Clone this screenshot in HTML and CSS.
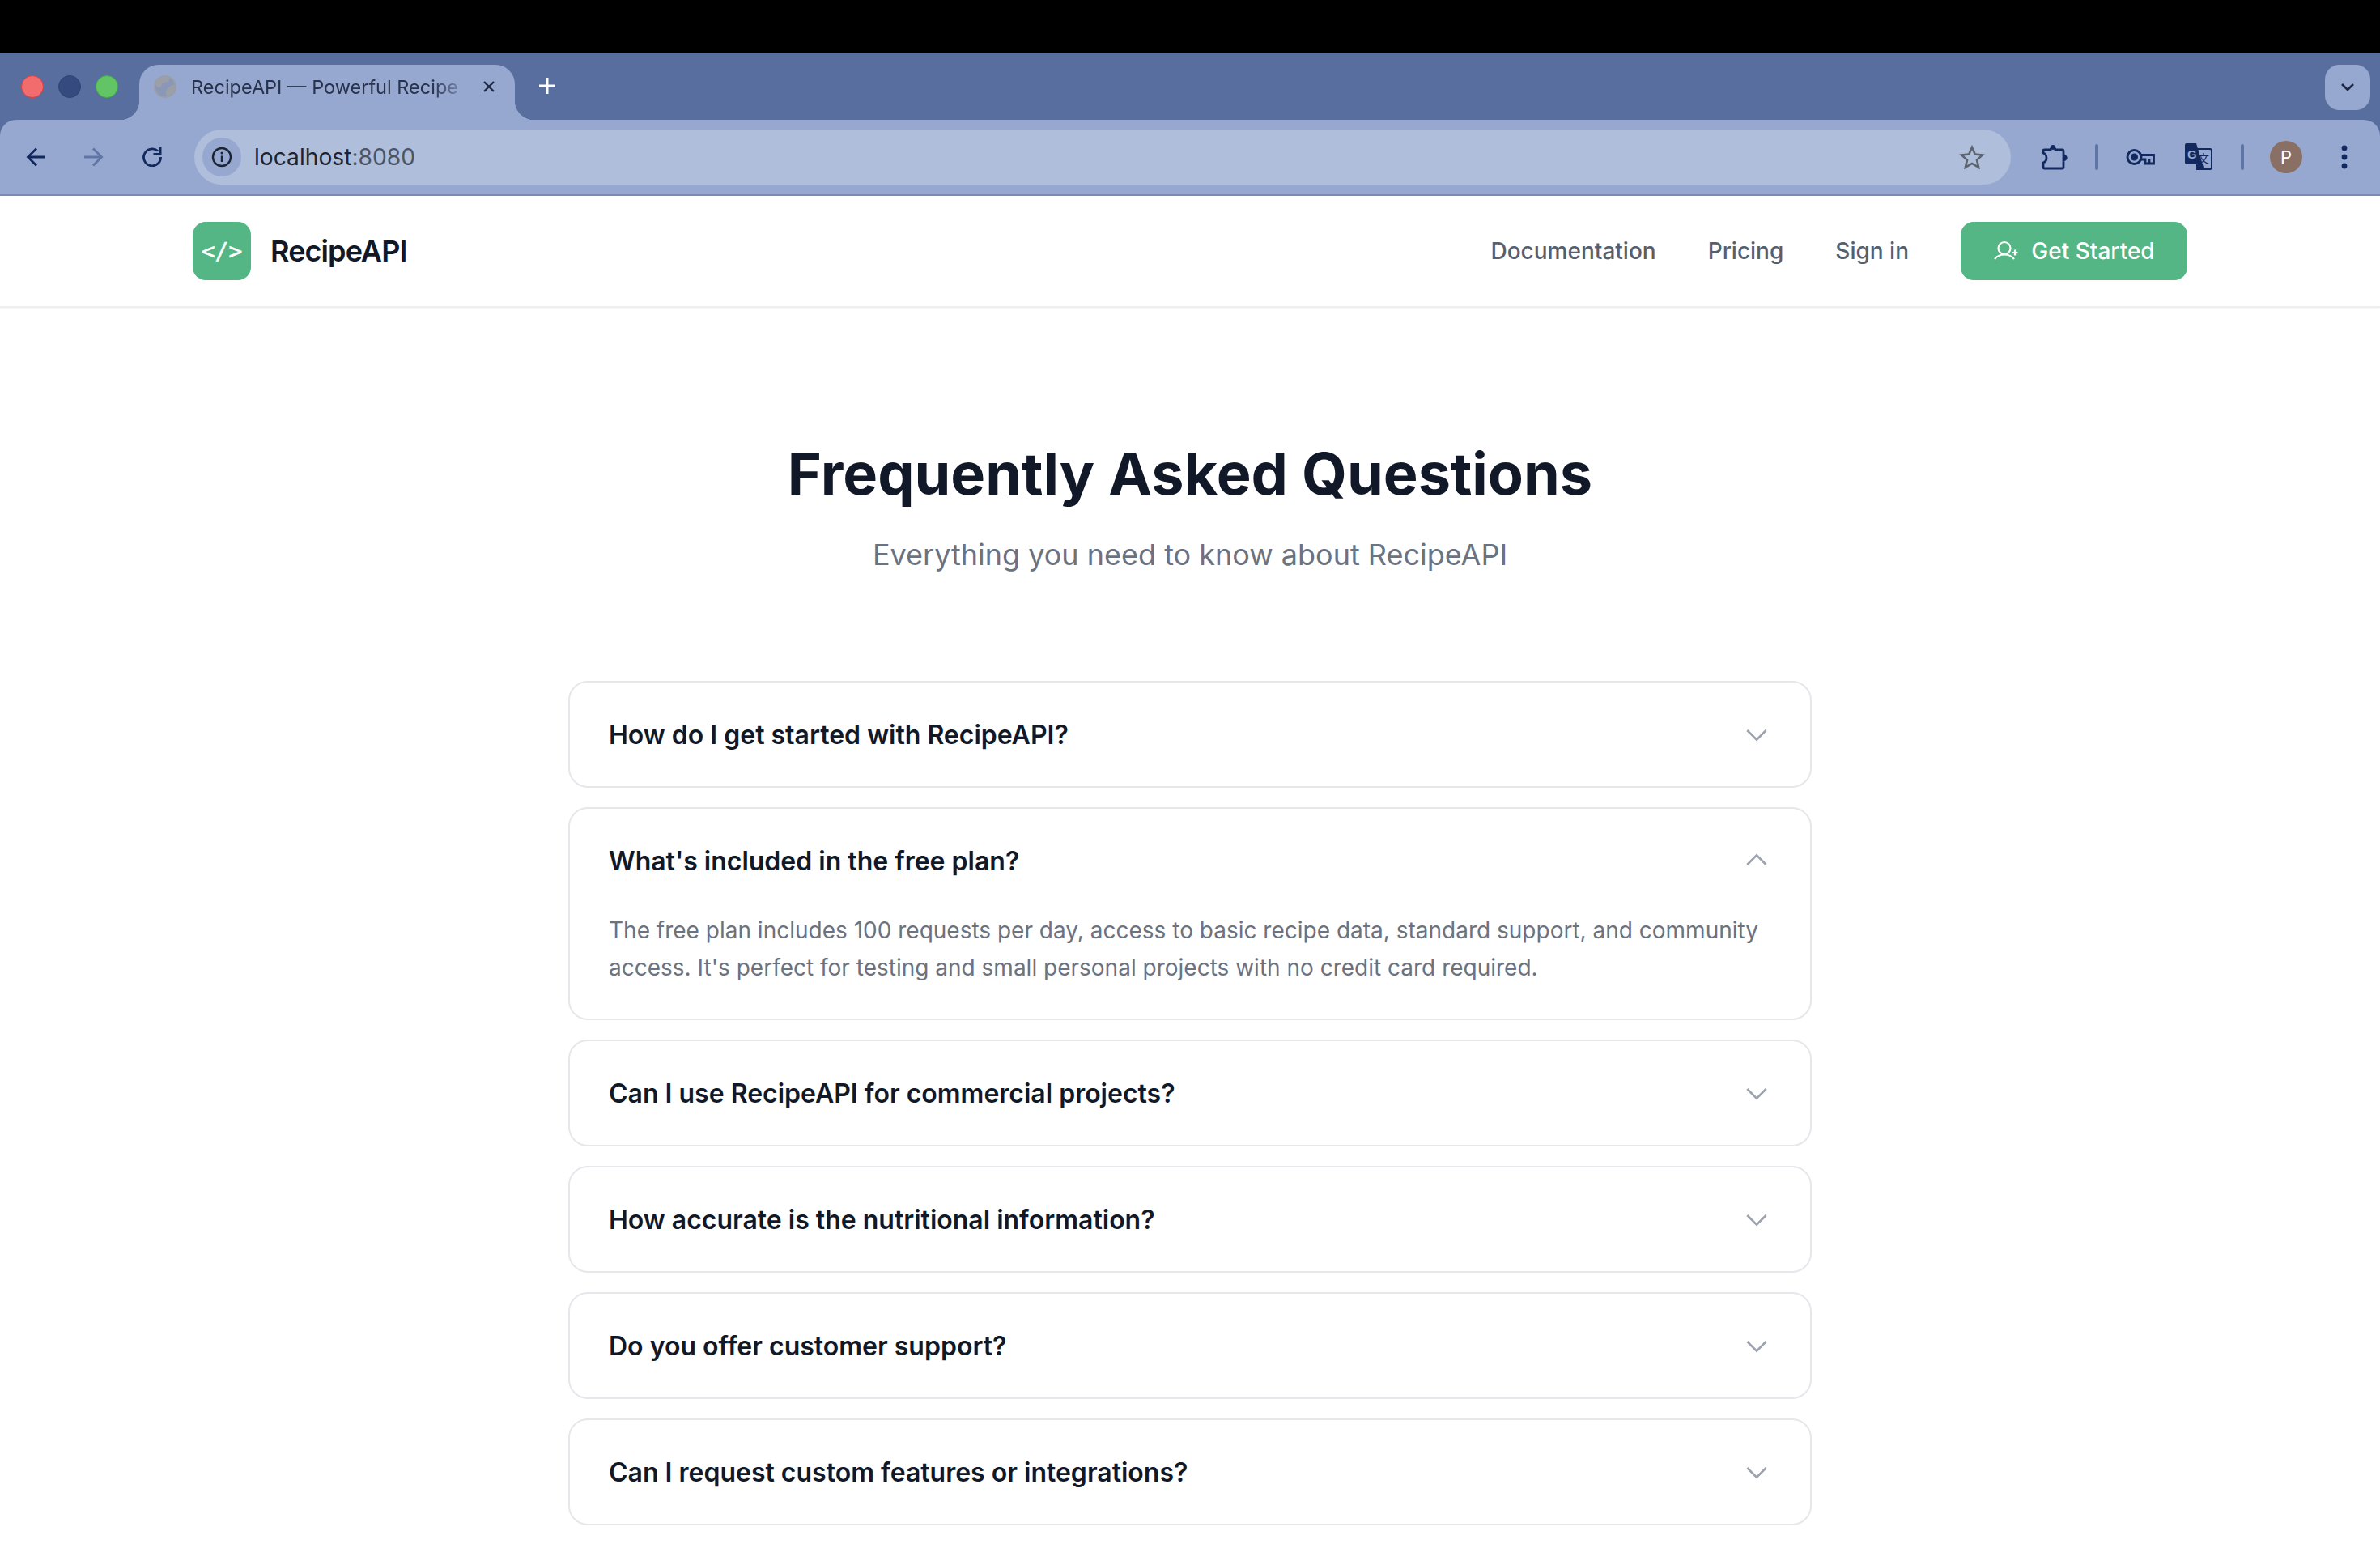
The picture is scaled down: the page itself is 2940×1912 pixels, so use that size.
FILE: index.html
```html
<!DOCTYPE html>
<html lang="en">
<head>
    <meta charset="UTF-8">
    <title>RecipeAPI — FAQ</title>
    <link rel="stylesheet" href="styles.css">
</head>
<body>

    <div class="topbar"></div>

    <div class="tabstrip">
        <div class="lights">
            <span class="light red"></span>
            <span class="light navy"></span>
            <span class="light green"></span>
        </div>
        <div class="tab">
            <svg class="globe" width="28" height="28" viewBox="0 0 28 28">
                <circle cx="14" cy="14" r="13" fill="#8a97b8" stroke="#9a9fa8" stroke-width="2"/>
                <path d="M6 4c4-3 9-3 13-1 1 3-2 6-6 6-4 0-2 4-5 6-3 1-5-1-6-4 0-3 2-5 4-7zM26 12c1 6-3 12-9 14-3-2-3-5-1-8 2-3 6-7 10-6z" fill="#9a9fa8"/>
            </svg>
            <span class="tab-title">RecipeAPI — Powerful Recipe</span>
            <svg class="tab-close" width="18" height="18" viewBox="0 0 18 18">
                <path d="M3 3l12 12M15 3L3 15" stroke="#1f2a44" stroke-width="2.4" fill="none"/>
            </svg>
        </div>
        <svg class="new-tab" width="24" height="24" viewBox="0 0 24 24">
            <path d="M12 2v20M2 12h20" stroke="#fff" stroke-width="3" fill="none"/>
        </svg>
        <div class="tab-menu">
            <svg width="20" height="14" viewBox="0 0 20 14">
                <path d="M3 3l7 7 7-7" stroke="#1c2742" stroke-width="2.6" fill="none"/>
            </svg>
        </div>
    </div>

    <div class="toolbar">
        <svg class="tool back" width="24" height="24" viewBox="0 0 24 24">
            <path d="M24 12H2M13 1.500 2.500 12 13 22.500" stroke="#12295f" stroke-width="2.800" fill="none"/>
        </svg>
        <svg class="tool forward" width="24" height="24" viewBox="0 0 24 24">
            <path d="M0 12h22M11 1.500 21.500 12 11 22.500" stroke="#5f75a6" stroke-width="2.800" fill="none"/>
        </svg>
        <svg class="tool reload" width="24" height="24" viewBox="0 0 24 24">
            <path d="M22.500 12A10.500 10.500 0 1 1 19 4.500" stroke="#12295f" stroke-width="2.800" fill="none"/>
            <path d="M23.500 0v10h-10V7h7V0z" fill="#12295f"/>
        </svg>
        <div class="omnibox">
            <div class="site-info">
                <svg width="26" height="26" viewBox="0 0 26 26">
                    <circle cx="13" cy="13" r="11" stroke="#1d2430" stroke-width="2.4" fill="none"/>
                    <path d="M13 11.500V19" stroke="#1d2430" stroke-width="2.4"/>
                    <circle cx="13" cy="8" r="1.500" fill="#1d2430"/>
                </svg>
            </div>
            <span class="url">localhost<span class="port">:8080</span></span>
            <svg class="star" width="32" height="30" viewBox="0 0 32 30">
                <path d="M16 3l3.800 8.600 9.200.9-7 6.100 2.100 9.100-8.100-4.800-8.100 4.800 2.100-9.100-7-6.100 9.200-.9z" stroke="#5c6470" stroke-width="2.600" fill="none"/>
            </svg>
        </div>
        <svg class="ext-puzzle" width="32" height="32" viewBox="0 0 32 32">
            <path d="M3.500 7H11a3 3 0 0 1 6 0h8.500a1.500 1.500 0 0 1 1.500 1.500V14a3 3 0 0 1 0 6v8.500a1.500 1.500 0 0 1-1.500 1.500h-22A1.500 1.500 0 0 1 2 28.500V23c3-1 4-3.500 4-6s-1-5-4-6V8.500A1.500 1.500 0 0 1 3.500 7z" stroke="#12295f" stroke-width="2.800" fill="none"/>
            <circle cx="14" cy="4" r="3" fill="#12295f"/>
            <circle cx="28.500" cy="17" r="3" fill="#12295f"/>
        </svg>
        <span class="tool-sep first"></span>
        <svg class="ext-key" width="36" height="20" viewBox="0 0 36 20">
            <circle cx="10.500" cy="10" r="8.500" stroke="#12295f" stroke-width="3" fill="none"/>
            <circle cx="10.500" cy="10" r="4.500" fill="#12295f"/>
            <path d="M19 7.500H34.500V18H24V13H19M29 13v5" stroke="#12295f" stroke-width="2.800" fill="none"/>
        </svg>
        <svg class="ext-translate" width="34" height="34" viewBox="0 0 34 34">
            <path d="M15 7h16a2 2 0 0 1 2 2v21a2 2 0 0 1-2 2H15z" fill="#96a8cf" stroke="#12295f" stroke-width="2"/>
            <path d="M2 0h12l10 33H17l-2-7H2a2 2 0 0 1-2-2V2a2 2 0 0 1 2-2z" fill="#12295f"/>
            <text x="3" y="19" class="translate-g">G</text>
            <text x="16" y="24" class="translate-zh">文</text>
        </svg>
        <span class="tool-sep second"></span>
        <div class="avatar">P</div>
        <svg class="kebab" width="10" height="32" viewBox="0 0 10 32">
            <circle cx="5" cy="5" r="3.400" fill="#12295f"/>
            <circle cx="5" cy="16" r="3.400" fill="#12295f"/>
            <circle cx="5" cy="27" r="3.400" fill="#12295f"/>
        </svg>
    </div>

    <nav class="nav">
        <a class="brand" href="#">
            <span class="brand-mark">&lt;/&gt;</span>
            <span class="brand-name">RecipeAPI</span>
        </a>
        <div class="nav-links">
            <a href="#">Documentation</a>
            <a href="#">Pricing</a>
            <a href="#">Sign in</a>
            <a class="btn-start" href="#">
                <svg width="32" height="32" viewBox="0 0 32 32">
                    <circle cx="14" cy="12.500" r="7.500" stroke="#fff" stroke-width="2.200" fill="none"/>
                    <path d="M2 26c3-4 7-5.500 12-5.500s9 1.500 12 5.500M27 14.500v7M23.500 18h7" stroke="#fff" stroke-width="2.200" fill="none"/>
                </svg>
                Get Started
            </a>
        </div>
    </nav>

    <main class="faq">
        <h1>Frequently Asked Questions</h1>
        <p class="faq-sub">Everything you need to know about RecipeAPI</p>

        <div class="faq-list">
            <div class="faq-item">
                <div class="faq-q">
                    <span>How do I get started with RecipeAPI?</span>
                    <svg class="chev" viewBox="0 0 24 24"><path d="M19 9l-7 7-7-7"/></svg>
                </div>
            </div>
            <div class="faq-item open">
                <div class="faq-q">
                    <span>What's included in the free plan?</span>
                    <svg class="chev" viewBox="0 0 24 24"><path d="M5 15l7-7 7 7"/></svg>
                </div>
                <p class="faq-a">The free plan includes 100 requests per day, access to basic recipe data, standard support, and community access. It's perfect for testing and small personal projects with no credit card required.</p>
            </div>
            <div class="faq-item">
                <div class="faq-q">
                    <span>Can I use RecipeAPI for commercial projects?</span>
                    <svg class="chev" viewBox="0 0 24 24"><path d="M19 9l-7 7-7-7"/></svg>
                </div>
            </div>
            <div class="faq-item">
                <div class="faq-q">
                    <span>How accurate is the nutritional information?</span>
                    <svg class="chev" viewBox="0 0 24 24"><path d="M19 9l-7 7-7-7"/></svg>
                </div>
            </div>
            <div class="faq-item">
                <div class="faq-q">
                    <span>Do you offer customer support?</span>
                    <svg class="chev" viewBox="0 0 24 24"><path d="M19 9l-7 7-7-7"/></svg>
                </div>
            </div>
            <div class="faq-item">
                <div class="faq-q">
                    <span>Can I request custom features or integrations?</span>
                    <svg class="chev" viewBox="0 0 24 24"><path d="M19 9l-7 7-7-7"/></svg>
                </div>
            </div>
        </div>
    </main>

</body>
</html>
```

FILE: styles.css
```css
* { box-sizing: border-box; }

html, body {
    margin: 0;
    height: 100%;
    overflow: hidden;
}
body {
    font-family: Inter, "Liberation Sans", sans-serif;
    background: #fff;
    color: #111827;
}
a { text-decoration: none; color: inherit; }

.topbar {
    height: 66px;
    background: #000;
}

/* tab row */
.tabstrip {
    height: 82px;
    background: #586e9f;
    display: flex;
    align-items: flex-start;
    padding-top: 14px;
}
.lights {
    display: flex;
    gap: 18px;
    padding: 13px 0 0 26px;
    width: 172px;
}
.light {
    width: 28px;
    height: 28px;
    border-radius: 50%;
}
.light.red { background: #f26b6d; border: 1px solid #e03e3e; }
.light.navy { background: #354a7e; border: 1px solid #2f4474; }
.light.green { background: #63c466; border: 1px solid #3eb23e; }

.tab {
    position: relative;
    width: 464px;
    height: 68px;
    background: #96a8cf;
    border-radius: 24px 24px 0 0;
    display: flex;
    align-items: center;
    padding: 0 0 14px 18px;
}
.tab::before,
.tab::after {
    content: "";
    position: absolute;
    bottom: 0;
    width: 24px;
    height: 24px;
}
.tab::before {
    left: -24px;
    background: radial-gradient(circle at 0 0, transparent 24px, #96a8cf 24.5px);
}
.tab::after {
    right: -24px;
    background: radial-gradient(circle at 100% 0, transparent 24px, #96a8cf 24.5px);
}
.globe { flex: none; }
.tab-title {
    width: 332px;
    margin-left: 18px;
    font-size: 23.500px;
    color: #27324d;
    white-space: nowrap;
    -webkit-mask-image: linear-gradient(to right, #000 90%, rgba(0, 0, 0, 0.25) 100%);
    mask-image: linear-gradient(to right, #000 90%, rgba(0, 0, 0, 0.25) 100%);
}
.tab-close { flex: none; margin-left: 27px; }
.new-tab { margin: 14px 0 0 28px; }
.tab-menu {
    margin-left: auto;
    margin-right: 12px;
    width: 56px;
    height: 56px;
    border-radius: 18px;
    background: #96a8cf;
    display: flex;
    align-items: center;
    justify-content: center;
}

/* address bar */
.toolbar {
    height: 94px;
    background: #96a8cf;
    border-bottom: 2px solid #7a8cb5;
    border-radius: 20px 20px 0 0;
    display: flex;
    align-items: center;
    padding: 0 0 0 32px;
    box-shadow: 0 -20px 0 #586e9f;
}
.tool { flex: none; }
.forward { margin-left: 48px; }
.reload { margin-left: 48px; }
.omnibox {
    width: 2244px;
    height: 68px;
    margin-left: 40px;
    border-radius: 34px;
    background: #afbedb;
    display: flex;
    align-items: center;
    padding-left: 10px;
}
.site-info {
    width: 48px;
    height: 48px;
    border-radius: 50%;
    background: #96a8cf;
    display: flex;
    align-items: center;
    justify-content: center;
}
.url {
    margin-left: 16px;
    font-size: 28.200px;
    color: #1d2430;
}
.port { color: #4c5566; }
.star { margin-left: auto; margin-right: 32px; }
.ext-puzzle { margin-left: 38px; }
.tool-sep {
    width: 4px;
    height: 32px;
    background: #5f75a6;
    border-radius: 2px;
}
.tool-sep.first { margin-left: 34px; }
.tool-sep.second { margin-left: 35px; }
.ext-key { margin-left: 34px; }
.ext-translate { margin-left: 37px; }
.translate-g {
    font-family: "Liberation Sans", sans-serif;
    font-size: 15px;
    font-weight: 700;
    fill: #96a8cf;
}
.translate-zh {
    font-family: "Noto Sans CJK SC", sans-serif;
    font-size: 14px;
    fill: #12295f;
}
.avatar {
    width: 40px;
    height: 40px;
    margin-left: 32px;
    border-radius: 50%;
    background: #8a6f64;
    color: #fff;
    font-size: 22px;
    display: flex;
    align-items: center;
    justify-content: center;
}
.kebab { margin-left: 47px; }

/* site header */
.nav {
    height: 138px;
    padding: 0 238px;
    display: flex;
    align-items: center;
    justify-content: space-between;
    box-shadow: 0 1px 2px rgba(0, 0, 0, 0.08);
    border-bottom: 2px solid #efeff1;
}
.brand {
    display: flex;
    align-items: center;
    gap: 24px;
}
.brand-mark {
    width: 72px;
    height: 72px;
    border-radius: 16px;
    background: #55b685;
    color: #fff;
    font-family: "DejaVu Sans Mono", monospace;
    font-size: 28px;
    -webkit-text-stroke: 0.5px #fff;
    display: flex;
    align-items: center;
    justify-content: center;
}
.brand-name {
    font-size: 36px;
    font-weight: 600;
    letter-spacing: -0.9px;
    color: #111827;
}
.nav-links {
    display: flex;
    align-items: center;
    gap: 64px;
    font-size: 28px;
    font-weight: 500;
    color: #565f6e;
}
.btn-start {
    width: 280px;
    height: 72px;
    border-radius: 16px;
    background: #55b685;
    color: #fff;
    display: flex;
    align-items: center;
    justify-content: center;
    gap: 15px;
}

/* faq */
.faq {
    padding-top: 161px;
    text-align: center;
}
.faq h1 {
    margin: 0;
    font-size: 72px;
    line-height: 88px;
    font-weight: 700;
    color: #111827;
}
.faq-sub {
    margin: 28px 0 0;
    font-size: 36px;
    line-height: 56px;
    color: #6b7280;
}
.faq-list {
    width: 1536px;
    margin: 128px auto 0;
    display: flex;
    flex-direction: column;
    gap: 24px;
    text-align: left;
}
.faq-item {
    border: 2px solid #e5e7eb;
    border-radius: 24px;
    padding: 36px 48px;
    background: #fff;
}
.faq-q {
    min-height: 56px;
    display: flex;
    align-items: center;
    justify-content: space-between;
    font-size: 32px;
    font-weight: 600;
    color: #111827;
}
.chev {
    width: 40px;
    height: 40px;
    margin-right: -2px;
    fill: none;
    stroke: #9ca3af;
    stroke-width: 1.600;
}
.faq-a {
    margin: 36px 0 4px;
    font-size: 28px;
    line-height: 45.500px;
    color: #6b7280;
}
```
